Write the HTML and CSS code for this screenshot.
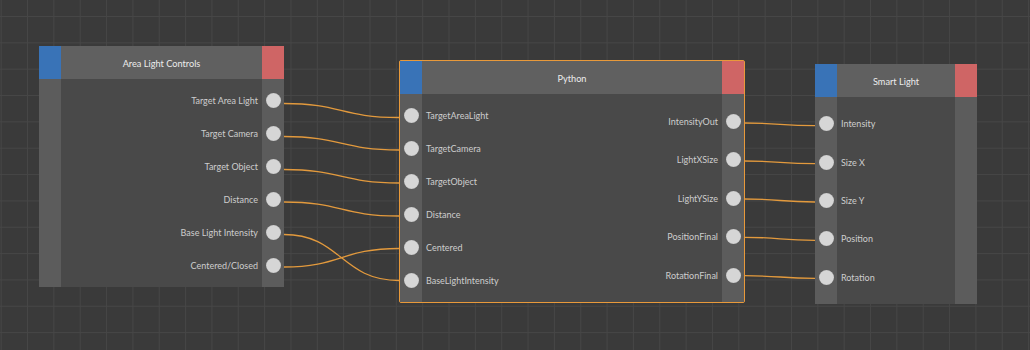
FILE: index.html
```html
<!DOCTYPE html>
<html>
<head>
<meta charset="utf-8">
<link rel="stylesheet" href="styles.css">
</head>
<body>
<div class="canvas">
  <svg class="wires" width="1030" height="350" viewBox="0 0 1030 350">
    <g fill="none" stroke="#e39a3d" stroke-width="1.3">
      <path d="M284 103.5 C341 103.5 341 117.5 399 117.5"/>
      <path d="M284 136.5 C341 136.5 341 150 399 150"/>
      <path d="M284 169.5 C341 169.5 341 183 399 183"/>
      <path d="M284 202 C341 202 341 216 399 216"/>
      <path d="M284 234.5 C341 234.5 341 280.5 399 280.5"/>
      <path d="M284 267 C341 267 341 248.5 399 248.5"/>
      <path d="M744 123 C780 123 780 125.7 815 125.7"/>
      <path d="M744 161 C780 161 780 163.7 815 163.7"/>
      <path d="M744 199 C780 199 780 202 815 202"/>
      <path d="M744 237.3 C780 237.3 780 240.3 815 240.3"/>
      <path d="M744 275.7 C780 275.7 780 278.3 815 278.3"/>
    </g>
  </svg>

  <div class="node node-area">
    <div class="head"><span class="cap cap-in"></span><span class="title">Area Light Controls</span><span class="cap cap-out"></span></div>
    <div class="body">
      <div class="strip"></div>
      <div class="center">
        <div class="col col-right">
          <div class="row">Target Area Light</div>
          <div class="row">Target Camera</div>
          <div class="row">Target Object</div>
          <div class="row">Distance</div>
          <div class="row">Base Light Intensity</div>
          <div class="row">Centered/Closed</div>
        </div>
      </div>
      <div class="strip">
        <div class="row"><span class="port"></span></div>
        <div class="row"><span class="port"></span></div>
        <div class="row"><span class="port"></span></div>
        <div class="row"><span class="port"></span></div>
        <div class="row"><span class="port"></span></div>
        <div class="row"><span class="port"></span></div>
      </div>
    </div>
  </div>

  <div class="node node-python">
    <div class="head"><span class="cap cap-in"></span><span class="title">Python</span><span class="cap cap-out"></span></div>
    <div class="body">
      <div class="strip">
        <div class="row"><span class="port"></span></div>
        <div class="row"><span class="port"></span></div>
        <div class="row"><span class="port"></span></div>
        <div class="row"><span class="port"></span></div>
        <div class="row"><span class="port"></span></div>
        <div class="row"><span class="port"></span></div>
      </div>
      <div class="center">
        <div class="col col-left">
          <div class="row">TargetAreaLight</div>
          <div class="row">TargetCamera</div>
          <div class="row">TargetObject</div>
          <div class="row">Distance</div>
          <div class="row">Centered</div>
          <div class="row">BaseLightIntensity</div>
        </div>
        <div class="col col-right">
          <div class="row">IntensityOut</div>
          <div class="row">LightXSize</div>
          <div class="row">LightYSize</div>
          <div class="row">PositionFinal</div>
          <div class="row">RotationFinal</div>
        </div>
      </div>
      <div class="strip">
        <div class="row"><span class="port"></span></div>
        <div class="row"><span class="port"></span></div>
        <div class="row"><span class="port"></span></div>
        <div class="row"><span class="port"></span></div>
        <div class="row"><span class="port"></span></div>
      </div>
    </div>
  </div>

  <div class="node node-smart">
    <div class="head"><span class="cap cap-in"></span><span class="title">Smart Light</span><span class="cap cap-out"></span></div>
    <div class="body">
      <div class="strip">
        <div class="row"><span class="port"></span></div>
        <div class="row"><span class="port"></span></div>
        <div class="row"><span class="port"></span></div>
        <div class="row"><span class="port"></span></div>
        <div class="row"><span class="port"></span></div>
      </div>
      <div class="center">
        <div class="col col-left">
          <div class="row">Intensity</div>
          <div class="row">Size X</div>
          <div class="row">Size Y</div>
          <div class="row">Position</div>
          <div class="row">Rotation</div>
        </div>
      </div>
      <div class="strip"></div>
    </div>
  </div>
</div>
</body>
</html>
```

FILE: styles.css
```css
html, body {
  margin: 0;
  padding: 0;
}
body {
  width: 1030px;
  height: 350px;
  overflow: hidden;
  font-family: "Lato", "Open Sans", sans-serif;
}
.canvas {
  position: relative;
  width: 1030px;
  height: 350px;
  background-color: #3a3a3a;
  background-image:
    linear-gradient(to right, #464646 1px, transparent 1px),
    linear-gradient(to bottom, #464646 1px, transparent 1px);
  background-size: 26.35px 26.35px;
  background-position: 0.7px 16px;
}
.wires {
  position: absolute;
  left: 0;
  top: 0;
}
.node {
  position: absolute;
  display: flex;
  flex-direction: column;
  box-sizing: border-box;
  background: #494949;
}
.node-area {
  left: 39px;
  top: 46px;
  width: 245px;
  height: 241px;
}
.node-python {
  left: 399px;
  top: 60px;
  width: 346px;
  height: 243px;
  border: 1px solid #e8993a;
  border-radius: 2px;
}
.node-smart {
  left: 815px;
  top: 64px;
  width: 162px;
  height: 240px;
}
.head {
  height: 33px;
  flex: none;
  display: flex;
  background: #606060;
}
.cap {
  width: 22px;
  flex: none;
}
.cap-in { background: #3973b7; }
.cap-out { background: #cf6565; }
.title {
  flex: 1;
  display: flex;
  align-items: center;
  justify-content: center;
  color: #ececec;
  font-size: 9.2px;
  padding-top: 1px;
}
.body {
  flex: 1;
  display: flex;
}
.strip {
  width: 22px;
  flex: none;
  background: #5c5c5c;
  display: flex;
  flex-direction: column;
  justify-content: space-evenly;
}
.center {
  flex: 1;
  display: flex;
  justify-content: space-between;
}
.col {
  display: flex;
  flex-direction: column;
  justify-content: space-evenly;
}
.col-left { padding-left: 4px; align-items: flex-start; }
.col-right { padding-right: 4px; align-items: flex-end; margin-left: auto; }
.row {
  height: 23px;
  display: flex;
  align-items: center;
  justify-content: center;
  color: #cdcdcd;
  font-size: 9px;
  white-space: nowrap;
}
.port {
  width: 15px;
  height: 15px;
  border-radius: 50%;
  background: radial-gradient(circle, #d6d6d6 0 60%, #c4c4c4 72%, #8e8e8e 100%);
}
```
